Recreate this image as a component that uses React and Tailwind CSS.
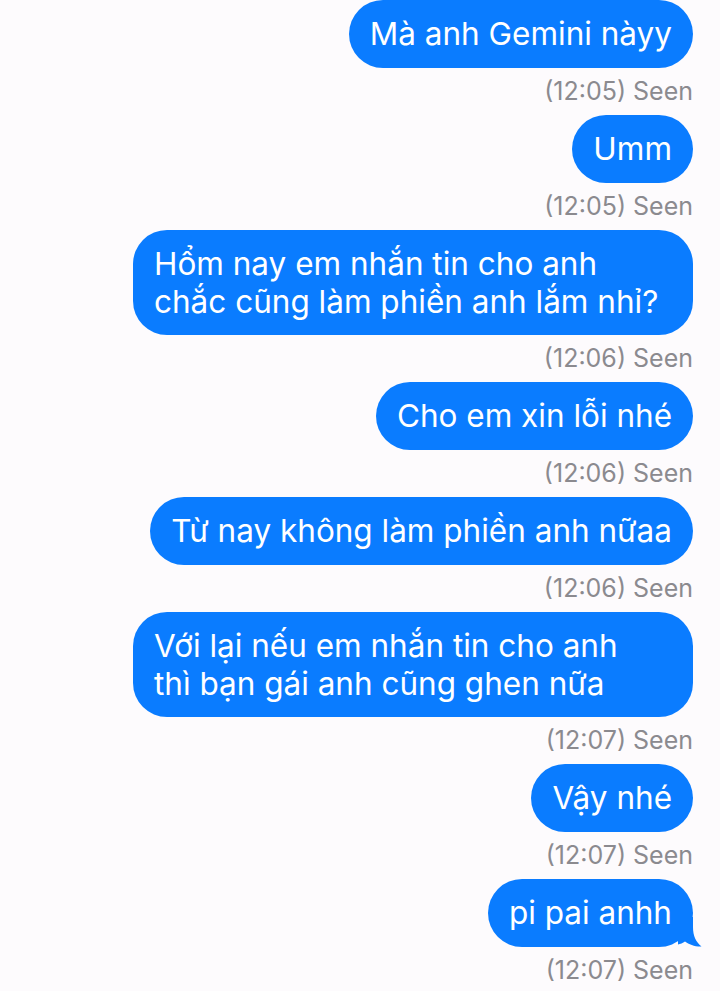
const messages = [
  { lines: ["Mà anh Gemini nàyy"], time: "12:05" },
  { lines: ["Umm"], time: "12:05" },
  { lines: ["Hổm nay em nhắn tin cho anh", "chắc cũng làm phiền anh lắm nhỉ?"], time: "12:06" },
  { lines: ["Cho em xin lỗi nhé"], time: "12:06" },
  { lines: ["Từ nay không làm phiền anh nữaa"], time: "12:06" },
  { lines: ["Với lại nếu em nhắn tin cho anh", "thì bạn gái anh cũng ghen nữa"], time: "12:07" },
  { lines: ["Vậy nhé"], time: "12:07" },
  { lines: ["pi pai anhh"], time: "12:07", tail: true },
];

function Bubble({ msg }) {
  const multi = msg.lines.length > 1;
  return (
    <div className="flex justify-end">
      <div
        className={`relative bg-[#0a7cff] text-white rounded-[34px] px-[21px] py-[15px] text-[31.5px] whitespace-nowrap ${
          multi ? "w-[560px] leading-[37.5px]" : "leading-[38px]"
        }`}
      >
        {msg.lines.map((l, i) => (
          <div key={i}>{l}</div>
        ))}
        {msg.tail && (
          <svg
            className="absolute right-[-9px] bottom-0"
            width="24"
            height="30"
            viewBox="0 0 24 30"
          >
            <path
              d="M0 0 L15 0 L15 10 C15 19 18 25 23.5 29.5 C17 29.8 11 27.5 7 24.5 C5 26 2 27 0 27.5 Z"
              fill="#0a7cff"
            />
          </svg>
        )}
      </div>
    </div>
  );
}

export default function App() {
  return (
    <div
      className="min-h-[991px] bg-[#fdfbfd] pr-[27px] overflow-hidden"
      style={{ fontFamily: "Inter, 'Noto Sans', sans-serif" }}
    >
      {messages.map((m, i) => (
        <div key={i}>
          <Bubble msg={m} />
          <div className="h-[47px] flex items-center justify-end text-[25px] text-[#8b8a8f]">
            ({m.time}) Seen
          </div>
        </div>
      ))}
    </div>
  );
}
